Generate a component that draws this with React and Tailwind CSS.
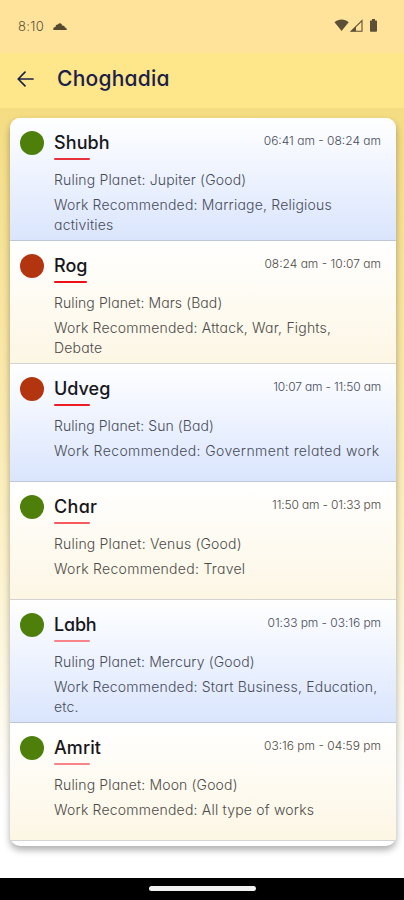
const rows = [
  { name: 'Shubh', nameFit: 'tracking-[0.1px]', time: '06:41 am - 08:24 am', timeFit: 'tracking-[0px]', planet: 'Jupiter (Good)', planetFit: 'tracking-[0.17px]', work: ['Marriage, Religious', 'activities'], workFit: 'tracking-[0.2px]', good: true, bar: 'w-9 bg-[#e8323a]', h: 'h-[123px]' },
  { name: 'Rog', nameFit: 'tracking-[0px]', time: '08:24 am - 10:07 am', timeFit: 'tracking-[0px]', planet: 'Mars (Bad)', planetFit: 'tracking-[0.09px]', work: ['Attack, War, Fights,', 'Debate'], workFit: 'tracking-[0.2px]', good: false, bar: 'w-[33px] bg-[#ee1018]', h: 'h-[123px]' },
  { name: 'Udveg', nameFit: 'tracking-[0px]', time: '10:07 am - 11:50 am', timeFit: 'tracking-[-0.18px]', planet: 'Sun (Bad)', planetFit: 'tracking-[0.07px]', work: ['Government related work'], workFit: 'tracking-[0.39px]', good: false, bar: 'w-9 bg-[#ee1c28]', h: 'h-[118px]' },
  { name: 'Char', nameFit: 'tracking-[0.3px]', time: '11:50 am - 01:33 pm', timeFit: 'tracking-[-0.15px]', planet: 'Venus (Good)', planetFit: 'tracking-[0.18px]', work: ['Travel'], workFit: 'tracking-[0.29px]', good: true, bar: 'w-9 bg-[#f65a5c]', h: 'h-[118px]' },
  { name: 'Labh', nameFit: 'tracking-[-0.2px]', time: '01:33 pm - 03:16 pm', timeFit: 'tracking-[-0.05px]', planet: 'Mercury (Good)', planetFit: 'tracking-[0.13px]', work: ['Start Business, Education,', 'etc.'], workFit: 'tracking-[0.2px]', good: true, bar: 'w-9 bg-[#f78488]', h: 'h-[123px]' },
  { name: 'Amrit', nameFit: 'tracking-[0.1px]', time: '03:16 pm - 04:59 pm', timeFit: 'tracking-[0px]', planet: 'Moon (Good)', planetFit: 'tracking-[0.15px]', work: ['All type of works'], workFit: 'tracking-[0.2px]', good: true, bar: 'w-9 bg-[#f78488]', h: 'h-[118px]' },
];

function StatusBar() {
  return (
    <div className="flex h-[53px] items-center bg-[#ffe39b] pl-[18px] pr-[26px] text-[#5b5038]">
      <span className="mt-[-2px] text-[13px] font-light leading-4 tracking-[0.3px]">8:10</span>
      <svg className="ml-[9px] mt-[-1px]" width="14" height="9" viewBox="0 0 14 9" fill="#55492f">
        <path d="M.5 8C-.3 6.200 1 4.800 2.500 4.900 2.600 3.200 3.800 2.300 5 2.600 5.400 1.200 7.400.6 8.500 2.100 9.100 2.900 9 3.300 9.200 3.600 10.800 3.400 11.800 4.300 11.800 5.400 13.300 5.500 14.200 6.700 13.500 8Z" />
      </svg>
      <svg className="ml-auto mt-[-2px]" width="44" height="15" viewBox="0 0 44 15" fill="#5b5037">
        <path d="M.5 4.200C4.600.6 10.600.6 14.700 4.200L7.600 13Z" />
        <path d="M17 13.300 28 2.500V13.300Z" fill="none" stroke="#5b5037" strokeWidth="1.100" />
        <path d="M17 13.300 22 8.400V13.300Z" />
        <path d="M36.500 2.500H38V1H41V2.500H42.500Q43 2.500 43 3V13Q43 13.800 42.200 13.800H36.800Q36 13.800 36 13V3Q36 2.500 36.500 2.500Z" />
      </svg>
    </div>
  );
}

function Row({ row, index }) {
  const tone = index % 2 ? 'from-[#ffffff] to-[#fcf6e4] border-[#d4d3d2] text-[#4c4b48]' : 'from-[#ffffff] to-[#dae5fd] border-[#bfc6d8] text-[#474c59]';
  return (
    <section className={`flex border-b bg-linear-to-b pl-2.5 pr-[15px] pt-3 ${row.h} ${tone}`}>
      <span className={`mt-[1px] size-6 shrink-0 rounded-full ${row.good ? 'bg-[#4f7f0b]' : 'bg-[#b33510]'}`} />
      <div className="ml-[10px] flex-1 whitespace-nowrap">
        <div className="flex items-start justify-between">
          <h2 className={`text-[18px] font-medium leading-[25px] text-[#17171b] ${row.nameFit}`}>{row.name}</h2>
          <span className={`pt-[1px] text-[12px] font-light leading-5 ${row.timeFit}`}>{row.time}</span>
        </div>
        <div className={`mt-[3px] h-0.5 rounded-full ${row.bar}`} />
        <p className={`mt-[10px] text-[14px] font-light leading-5 ${row.planetFit}`}>Ruling Planet: {row.planet}</p>
        <p className={`mt-[4.500px] text-[14px] font-light leading-5 ${row.workFit}`}>
          Work Recommended: {row.work[0]}
          {row.work[1] && <><br />{row.work[1]}</>}
        </p>
      </div>
    </section>
  );
}

export default function App() {
  return (
    <div className="flex h-[900px] w-[404px] flex-col overflow-hidden bg-white font-['Inter',sans-serif] [font-feature-settings:'cv11']">
      <StatusBar />
      <header className="flex h-[55px] items-center bg-[#fee68b] pb-[3px] pl-[17px] text-[#1b2048]">
        <svg width="17" height="16" viewBox="0 0 17 16" fill="none" stroke="currentColor" strokeWidth="1.700" strokeLinecap="round" strokeLinejoin="round">
          <path d="M16 8H1.500M8 1.200 1.200 8 8 14.800" />
        </svg>
        <h1 className="ml-[23px] text-[21px] font-medium leading-6 tracking-[0.25px]">Choghadia</h1>
      </header>
      <main className="h-[770px] bg-linear-to-b from-[#f4dc82] via-[#fbecb6] via-45% to-white to-90% pl-2.5 pr-2 pt-[10px]">
        <div className="h-[728px] overflow-hidden rounded-[10px] bg-white shadow-[0_4px_7px_rgba(0,0,0,0.32)]">
          {rows.map((row, i) => <Row key={row.name} row={row} index={i} />)}
        </div>
      </main>
      <footer className="flex h-[22px] justify-center bg-black pt-2">
        <div className="h-[5px] w-[107px] rounded-full bg-[#f1f1f1]" />
      </footer>
    </div>
  );
}
